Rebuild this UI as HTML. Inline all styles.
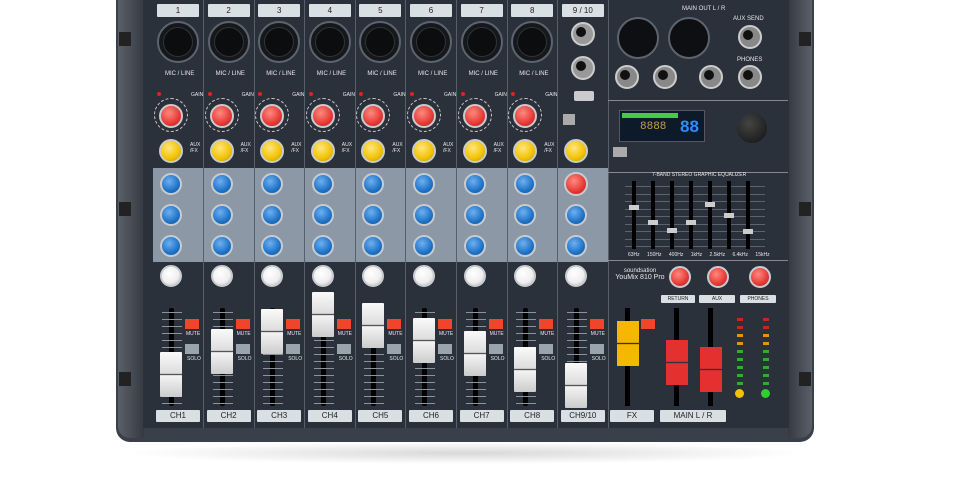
<!DOCTYPE html>
<html><head><meta charset="utf-8"><style>
body{margin:0;width:960px;height:480px;background:#fff;overflow:hidden;position:relative;font-family:"Liberation Sans",sans-serif}
.a{position:absolute}
.lbl{position:absolute;background:#d9e0e4;color:#222;font-size:8px;text-align:center;border-radius:1px}
.t{position:absolute;color:#e6e9ec;font-size:5px;white-space:nowrap}
.k{position:absolute;border-radius:50%}
</style></head><body>
<div class="a" style="left:120px;top:442px;width:690px;height:22px;background:radial-gradient(ellipse at center,#d8d8d8 0%,#fff 70%)"></div>
<div class="a" style="left:116px;top:0;width:698px;height:442px;background:#3a4049;border-radius:0 0 14px 14px"></div>
<div class="a" style="left:118px;top:0;width:26px;height:438px;background:linear-gradient(90deg,#5a6069,#353a42);border-radius:0 0 0 12px"></div>
<div class="a" style="left:788px;top:0;width:24px;height:438px;background:linear-gradient(90deg,#353a42,#5a6069);border-radius:0 0 12px 0"></div>
<div class="a" style="left:119px;top:32px;width:12px;height:14px;background:#222"></div>
<div class="a" style="left:119px;top:202px;width:12px;height:14px;background:#222"></div>
<div class="a" style="left:119px;top:372px;width:12px;height:14px;background:#222"></div>
<div class="a" style="left:799px;top:32px;width:12px;height:14px;background:#222"></div>
<div class="a" style="left:799px;top:202px;width:12px;height:14px;background:#222"></div>
<div class="a" style="left:799px;top:372px;width:12px;height:14px;background:#222"></div>
<div class="a" style="left:143px;top:0;width:646px;height:428px;background:#2a313b"></div>
<div class="a" style="left:153px;top:168px;width:455px;height:94px;background:#8c98a6"></div>
<div id="g"></div>
<script>
var h='';
function A(s){h+=s}
var fy=[352,329,309,292,303,318,331,347,363];
function kn(cx,cy,d,g){A('<div class="k" style="left:'+(cx-d/2-2)+'px;top:'+(cy-d/2-2)+'px;width:'+d+'px;height:'+d+'px;background:'+g+';border:2px solid #c8ccd0"></div>')}
var RED='radial-gradient(circle at 40% 35%,#ff8a80,#e53935 60%,#a22)',YEL='radial-gradient(circle at 40% 35%,#ffe680,#f2c200 60%,#b98f00)',BLU='radial-gradient(circle at 40% 35%,#6fb0f0,#1e73c8 60%,#124f8a)',WHT='radial-gradient(circle at 40% 35%,#fff,#eee 60%,#aaa)';
for(var i=0;i<9;i++){
 var x=153+i*50.6,c=x+25,kc=c-7;
 A('<div class="a" style="left:'+(x+50)+'px;top:0;width:1px;height:428px;background:#55606c"></div>');
 A('<div class="lbl" style="left:'+(x+4)+'px;top:4px;width:42px;height:13px;line-height:13px">'+(i<8?i+1:'9 / 10')+'</div>');
 if(i<8){
  A('<div class="k" style="left:'+(c-21)+'px;top:21px;width:38px;height:38px;background:#15181c;border:2px solid #5c646c"></div>');
  A('<div class="k" style="left:'+(c-15)+'px;top:27px;width:28px;height:28px;background:#0c0d0f;border:1px solid #333"></div>');
  A('<div class="t" style="left:'+(c-13)+'px;top:71px;font-size:6px">MIC / LINE</div>');
  A('<div class="t" style="left:'+(c+13)+'px;top:92px">GAIN</div>');
  A('<div class="k" style="left:'+(x+4)+'px;top:92px;width:4px;height:4px;background:#d22"></div>');
  A('<div class="k" style="left:'+(kc-17)+'px;top:98px;width:34px;height:34px;border:1px dashed #ccc;box-sizing:border-box"></div>');
  kn(kc,116,20,RED); kn(kc,151,20,YEL);
  A('<div class="t" style="left:'+(c+12)+'px;top:142px">AUX<br>/FX</div>');
  kn(kc,184,18,BLU);kn(kc,215,18,BLU);kn(kc,246,18,BLU);
 } else {
  A('<div class="k" style="left:'+(c-12)+'px;top:22px;width:20px;height:20px;background:#999;border:2px solid #ccc"></div><div class="k" style="left:'+(c-7)+'px;top:27px;width:10px;height:10px;background:#111"></div>');
  A('<div class="k" style="left:'+(c-12)+'px;top:56px;width:20px;height:20px;background:#999;border:2px solid #ccc"></div><div class="k" style="left:'+(c-7)+'px;top:61px;width:10px;height:10px;background:#111"></div>');
  A('<div class="a" style="left:'+(c-9)+'px;top:91px;width:20px;height:10px;background:#ccc;border-radius:2px"></div>');
  A('<div class="a" style="left:'+(c-20)+'px;top:114px;width:12px;height:11px;background:#aaa"></div>');
  kn(kc,151,20,YEL);kn(kc,184,20,RED);kn(kc,215,18,BLU);kn(kc,246,18,BLU);
 }
 kn(kc,276,18,WHT);
 A('<div class="a" style="left:'+(c-9)+'px;top:308px;width:5px;height:98px;background:#000;border-radius:2px"></div>');
 for(var m=0;m<14;m++)A('<div class="a" style="left:'+(c-16)+'px;top:'+(312+m*7)+'px;width:20px;height:1px;background:#8a949e"></div>');
 A('<div class="a" style="left:'+(c-18)+'px;top:'+fy[i]+'px;width:22px;height:45px;background:linear-gradient(#fafafa,#ddd 48%,#555 49%,#555 51%,#f4f4f4 52%,#ccc);border-radius:1px"></div>');
 A('<div class="a" style="left:'+(c+7)+'px;top:319px;width:14px;height:10px;background:#f0452a"></div><div class="t" style="left:'+(c+8)+'px;top:331px">MUTE</div>');
 A('<div class="a" style="left:'+(c+7)+'px;top:344px;width:14px;height:10px;background:#9aa4ad"></div><div class="t" style="left:'+(c+9)+'px;top:356px">SOLO</div>');
 A('<div class="lbl" style="left:'+(x+3)+'px;top:410px;width:44px;height:12px;line-height:12px;font-size:8px">'+(i<8?'CH'+(i+1):'CH9/10')+'</div>');
}
A('<div class="a" style="left:608px;top:100px;width:180px;height:1px;background:#888"></div>');
A('<div class="a" style="left:608px;top:172px;width:180px;height:1px;background:#888"></div>');
A('<div class="a" style="left:608px;top:260px;width:180px;height:1px;background:#888"></div>');
A('<div class="t" style="left:682px;top:6px;font-size:6px">MAIN OUT L / R</div><div class="t" style="left:733px;top:16px;font-size:6px">AUX SEND</div><div class="t" style="left:737px;top:57px;font-size:6px">PHONES</div>');
[[637,37],[688,37]].forEach(function(p){A('<div class="k" style="left:'+(p[0]-20)+'px;top:'+(p[1]-20)+'px;width:38px;height:38px;background:#0d0f12;border:2px solid #5c646c"></div>')});
[[627,77],[665,77],[711,77],[750,77],[750,37]].forEach(function(p){A('<div class="k" style="left:'+(p[0]-12)+'px;top:'+(p[1]-12)+'px;width:20px;height:20px;background:#888;border:2px solid #ccc"></div><div class="k" style="left:'+(p[0]-7)+'px;top:'+(p[1]-7)+'px;width:10px;height:10px;background:#111"></div>')});
A('<div class="a" style="left:619px;top:110px;width:84px;height:30px;background:#0d1a2a;border:1px solid #556"></div>');
A('<div class="a" style="left:622px;top:113px;width:56px;height:5px;background:#4c4"></div><div class="a" style="left:640px;top:121px;color:#c8a040;font-size:11px;font-family:Liberation Mono">8888</div><div class="a" style="left:680px;top:117px;color:#2a8cff;font-size:17px;font-weight:bold">88</div>');
A('<div class="k" style="left:737px;top:113px;width:30px;height:30px;background:radial-gradient(circle at 40% 35%,#444,#111)"></div>');
A('<div class="a" style="left:613px;top:147px;width:14px;height:10px;background:#aaa"></div>');
A('<div class="t" style="left:652px;top:172px;font-size:5px">7-BAND STEREO GRAPHIC EQUALIZER</div>');
var ey=[205,220,228,220,202,213,229];
for(var r=0;r<9;r++)A('<div class="a" style="left:625px;top:'+(186+r*7.5)+'px;width:140px;height:1px;background:#5a6470"></div>');
for(var e=0;e<7;e++){var ex=632+e*19;A('<div class="a" style="left:'+ex+'px;top:181px;width:4px;height:68px;background:#000"></div><div class="a" style="left:'+(ex-3)+'px;top:'+ey[e]+'px;width:10px;height:5px;background:#ccc"></div>');}
A('<div class="t" style="left:628px;top:252px;font-size:5px;word-spacing:6px">63Hz 150Hz 400Hz 1kHz 2.5kHz 6.4kHz 15kHz</div>');
A('<div class="t" style="left:612px;top:268px;font-size:6px;text-align:center;width:56px">soundsation<br><span style="font-size:7px">YouMix 810 Pro</span></div>');
[680,718,760].forEach(function(x){kn(x,277,18,RED)});
A('<div class="lbl" style="left:661px;top:295px;width:34px;height:8px;line-height:8px;font-size:5px">RETURN</div><div class="lbl" style="left:699px;top:295px;width:36px;height:8px;line-height:8px;font-size:5px">AUX</div><div class="lbl" style="left:740px;top:295px;width:36px;height:8px;line-height:8px;font-size:5px">PHONES</div>');
[[626,321,'#f5b800'],[675,340,'#e53030'],[709,347,'#e53030']].forEach(function(f){A('<div class="a" style="left:'+(f[0]-1)+'px;top:308px;width:5px;height:98px;background:#000"></div><div class="a" style="left:'+(f[0]-9)+'px;top:'+f[1]+'px;width:22px;height:45px;background:linear-gradient('+f[2]+','+f[2]+' 48%,#333 49%,#333 51%,'+f[2]+' 52%)"></div>')});
A('<div class="a" style="left:641px;top:319px;width:14px;height:10px;background:#f0452a"></div>');
for(var l=0;l<9;l++){var col=l<2?'#c22':(l<4?'#d90':'#3a3');A('<div class="a" style="left:737px;top:'+(318+l*8)+'px;width:6px;height:3px;background:'+col+'"></div><div class="a" style="left:763px;top:'+(318+l*8)+'px;width:6px;height:3px;background:'+col+'"></div>');}
A('<div class="k" style="left:735px;top:389px;width:9px;height:9px;background:#f2c200"></div><div class="k" style="left:761px;top:389px;width:9px;height:9px;background:#3c3"></div>');
A('<div class="lbl" style="left:610px;top:410px;width:44px;height:12px;line-height:12px">FX</div><div class="lbl" style="left:660px;top:410px;width:66px;height:12px;line-height:12px">MAIN L / R</div>');
document.getElementById('g').innerHTML=h;
</script>
</body></html>
